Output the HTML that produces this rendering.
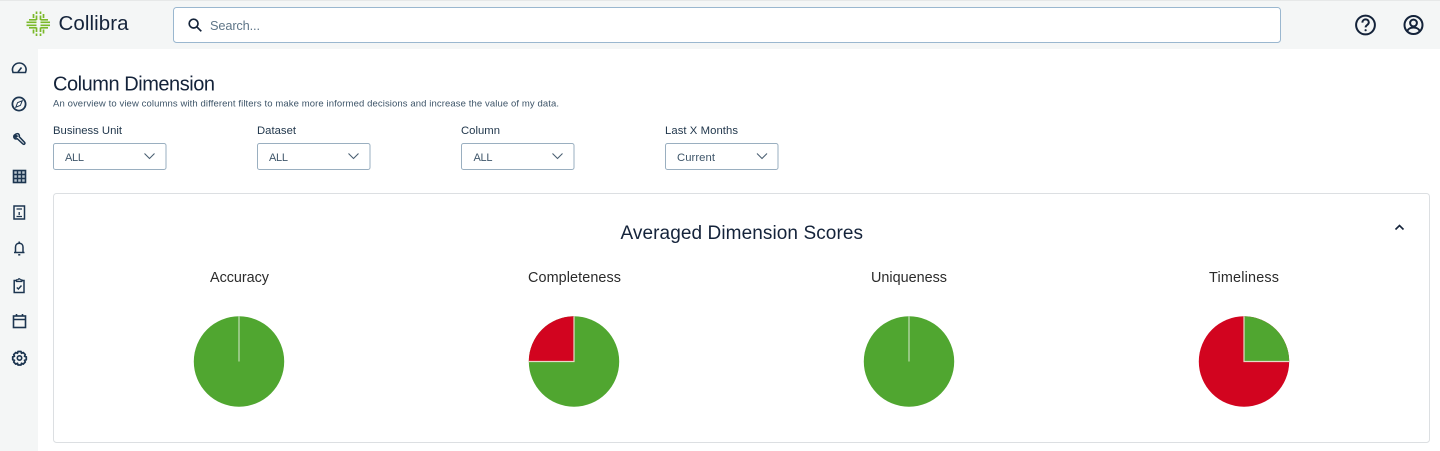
<!DOCTYPE html>
<html><head><meta charset="utf-8"><title>Column Dimension</title>
<style>
html,body{margin:0;padding:0;background:#fff;width:1440px;height:451px;overflow:hidden}
svg{display:block;filter:blur(.35px)}
text{font-family:"Liberation Sans",sans-serif}
</style></head><body>
<svg width="1440" height="451" viewBox="0 0 1440 451" xmlns="http://www.w3.org/2000/svg">
<rect width="1440" height="451" fill="#fff"/>
<rect width="1440" height="49" fill="#f4f6f6"/>
<rect width="38" height="451" fill="#f4f6f6"/>
<rect width="1440" height="1" fill="#e6e8e8"/>

<!-- logo -->
<g stroke="#7ab929" stroke-width="1.700" fill="none">
<path d="M29 19.800H36.500M26.500 22.300H36.500M26.500 25.300H36.500M29 27.800H36.500"/>
<path d="M40.500 19.800H48M40.500 22.300H50M40.500 25.300H50M40.500 27.800H48"/>
<path d="M33.500 14V18M36.500 11.500V14M36.500 15.500V20M40.500 11.500V14M40.500 15.500V20M43.500 14V18"/>
<path d="M33.500 29.500V33.500M36.500 27.500V32M36.500 33.500V36M40.500 27.500V32M40.500 33.500V36M43.500 29.500V33.500"/>
</g>
<text x="58.500" y="30" font-size="20.500" fill="#14233a" textLength="70" lengthAdjust="spacing">Collibra</text>

<!-- search -->
<rect x="173.500" y="7.500" width="1107" height="35" rx="3" fill="#fff" stroke="#9ab7cf"/>
<g fill="none" stroke="#14233a" stroke-width="1.700"><circle cx="193.600" cy="23.600" r="4.400"/><path d="M196.800 26.800L201.300 31.300"/></g>
<text x="210" y="30" font-size="12.800" fill="#5f7688" textLength="50" lengthAdjust="spacing">Search...</text>

<!-- header right -->
<g fill="none" stroke="#14233a" stroke-width="2">
<circle cx="1365.500" cy="25" r="9.400"/>
<path d="M1362.400 22.600c0-4.200 6.400-4.200 6.400-.2 0 2.600-3.200 2.600-3.200 5"/>
<circle cx="1413.500" cy="25" r="9"/>
<circle cx="1413.500" cy="23" r="3.400"/>
<path d="M1407.200 31.400c1.600-5.200 11-5.200 12.600 0"/>
</g>
<circle cx="1365.600" cy="30.200" r="1.100" fill="#14233a"/>

<!-- sidebar icons -->
<g fill="none" stroke="#1c3550" stroke-width="1.600">
<path d="M13 72.500c-2-5.500 2-9.500 6.300-9.500s8.300 4 6.200 9.500z"/>
<path d="M18 72L21.500 67.500"/>
<circle cx="19" cy="104" r="6.600" stroke-width="1.800"/>
<path d="M22.200 100.800L20.400 105.400L15.800 107.200L17.600 102.600Z" fill="#fff" stroke-width="1"/>
<path d="M14.500 135c1.500-1.500 3.500-1.800 4.500-.5.500.7.500 1.500.2 2.200L24.500 142.300c.6.700.6 1.200.1 1.700s-1.100.5-1.700-.1L17.300 138.700c-1.200.5-2.500.2-3.200-.8-.5-.7-.5-1.300-.2-2l2 1.500 1.300-1.300z" stroke-width="1.500"/>
<rect x="13.500" y="170.500" width="12" height="12" stroke-width="1.600" fill="#b9c6cf"/>
<path d="M17.500 170.500V182.500M21.500 170.500V182.500M13.500 174.500H25.500M13.500 178.500H25.500" stroke-width="1.400"/>
<rect x="14" y="206" width="10.500" height="13" stroke-width="1.500"/>
<path d="M16.500 209H22M16.500 216.500H22M19.200 212V215" stroke-width="1.300"/>
<path d="M14 252.500H24.500M15.500 252.500V247c0-5 7.500-5 7.500 0v5.500" stroke-width="1.500"/>
<path d="M18.200 254.800H20.300" stroke-width="1.500"/>
<path d="M19.200 241.500V243" stroke-width="1.500"/>
<path d="M16.500 280.500H14.200V292.500H24V280.500H21.800" stroke-width="1.500"/>
<path d="M16.500 281.500V279.800H18c.4-1.400 1.900-1.400 2.300 0H21.800V281.500Z" stroke-width="1.200"/>
<path d="M16.800 287.500L18.400 289L21.500 285.500" stroke-width="1.400"/>
<rect x="13.500" y="316" width="12" height="11.500" stroke-width="1.600"/>
<path d="M13.500 319.500H25.500M16.500 314V316M22.500 314V316" stroke-width="1.600"/>
<circle cx="19.500" cy="358" r="2.200" stroke-width="1.600"/>
<path d="M18 351.500H21L21.500 353.300L23.200 352.500L25.300 354.600L24.500 356.300L26.300 356.800V359.800L24.500 360.300L25.300 362L23.200 364.100L21.500 363.300L21 365H18L17.500 363.300L15.800 364.100L13.700 362L14.500 360.300L12.700 359.800V356.800L14.500 356.300L13.700 354.600L15.800 352.500L17.500 353.300Z" stroke-width="1.700" stroke-linejoin="round"/>
</g>

<!-- title -->
<text x="53" y="90.500" font-size="20" fill="#14233a" textLength="162" lengthAdjust="spacing">Column Dimension</text>
<text x="53" y="106.500" font-size="9.500" fill="#3d5468" textLength="506" lengthAdjust="spacing">An overview to view columns with different filters to make more informed decisions and increase the value of my data.</text>

<!-- filters -->
<g font-size="11.300" fill="#22384d">
<text x="53" y="134" textLength="69" lengthAdjust="spacing">Business Unit</text>
<text x="257" y="134" textLength="39" lengthAdjust="spacing">Dataset</text>
<text x="461" y="134" textLength="39" lengthAdjust="spacing">Column</text>
<text x="665" y="134" textLength="73" lengthAdjust="spacing">Last X Months</text>
</g>
<g fill="#fff" stroke="#9aafc0">
<rect x="53.500" y="143.500" width="112.500" height="26" rx="2"/>
<rect x="257.500" y="143.500" width="112.500" height="26" rx="2"/>
<rect x="461.500" y="143.500" width="112.500" height="26" rx="2"/>
<rect x="665.500" y="143.500" width="112.500" height="26" rx="2"/>
</g>
<g font-size="11" fill="#3f566a">
<text x="65" y="161" textLength="19" lengthAdjust="spacing">ALL</text>
<text x="269" y="161" textLength="19" lengthAdjust="spacing">ALL</text>
<text x="473.500" y="161" textLength="19" lengthAdjust="spacing">ALL</text>
<text x="677" y="161" font-size="11.300" textLength="38" lengthAdjust="spacing">Current</text>
</g>
<g fill="none" stroke="#4b6073" stroke-width="1.100">
<path d="M144.500 153.500L149.500 158.500L154.500 153.500"/>
<path d="M348.500 153.500L353.500 158.500L358.500 153.500"/>
<path d="M552.500 153.500L557.500 158.500L562.500 153.500"/>
<path d="M757 153.500L762 158.500L767 153.500"/>
</g>

<!-- card -->
<rect x="53.500" y="193.500" width="1376" height="249" rx="3" fill="#fff" stroke="#dcdfe2"/>
<text x="620.500" y="239" font-size="19" fill="#14233a" textLength="242.500" lengthAdjust="spacing">Averaged Dimension Scores</text>
<path d="M1395.500 229.500L1399.500 225.500L1403.500 229.500" fill="none" stroke="#14233a" stroke-width="1.600"/>

<g font-size="14.400" fill="#2b2b2b">
<text x="210" y="282" textLength="59" lengthAdjust="spacing">Accuracy</text>
<text x="528" y="282" textLength="93" lengthAdjust="spacing">Completeness</text>
<text x="871" y="282" textLength="76" lengthAdjust="spacing">Uniqueness</text>
<text x="1209" y="282" textLength="70" lengthAdjust="spacing">Timeliness</text>
</g>

<!-- pies -->
<circle cx="239" cy="361.500" r="45.200" fill="#50a630"/>
<path d="M239 316.300V361.500" stroke="#d9e8d0" stroke-width="1"/>

<circle cx="574" cy="361.500" r="45.200" fill="#50a630"/>
<path d="M574 316.300V361.500H528.800A45.200 45.200 0 0 1 574 316.300Z" fill="#d2041f"/>
<path d="M574 316.300V361.500H528.800" fill="none" stroke="#e6d9c8" stroke-width="1.200"/>

<circle cx="909" cy="361.500" r="45.200" fill="#50a630"/>
<path d="M909 316.300V361.500" stroke="#d9e8d0" stroke-width="1"/>

<circle cx="1244" cy="361.500" r="45.200" fill="#d2041f"/>
<path d="M1244 316.300V361.500H1289.200A45.200 45.200 0 0 0 1244 316.300Z" fill="#50a630"/>
<path d="M1244 316.300V361.500H1289.200" fill="none" stroke="#e6d9c8" stroke-width="1.200"/>
</svg>
</body></html>
